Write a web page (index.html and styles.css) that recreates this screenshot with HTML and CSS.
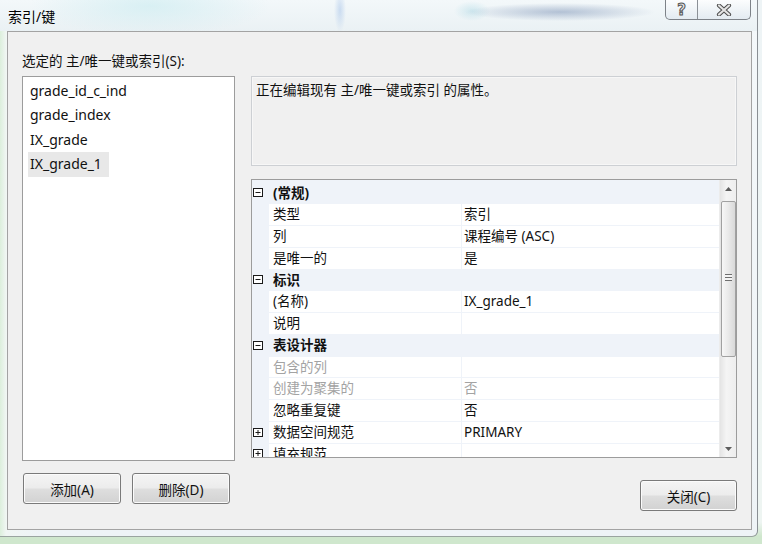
FILE: index.html
```html
<!DOCTYPE html>
<html lang="zh-CN">
<head>
    <meta charset="UTF-8">
    <title>索引/键</title>
    <link rel="stylesheet" href="styles.css">
</head>
<body>
    <div class="screen">
        <div class="window">
            <div class="titlebar">
                <span class="title">索引/键</span>
                <div class="caption-buttons">
                    <div class="cap-btn help">?</div>
                    <div class="cap-btn close">
                        <svg width="18" height="12" viewBox="0 0 18 12">
                            <path d="M4 1.5 L14 10.5 M14 1.5 L4 10.5" stroke="#4f4f4f" stroke-width="4.2" stroke-linecap="round"/>
                            <path d="M4 1.5 L14 10.5 M14 1.5 L4 10.5" stroke="#e4e4e4" stroke-width="2.2" stroke-linecap="round"/>
                        </svg>
                    </div>
                </div>
            </div>

            <div class="client">
                <div class="caption">选定的 主/唯一键或索引(S):</div>

                <div class="main">
                    <ul class="index-list">
                        <li>grade_id_c_ind</li>
                        <li>grade_index</li>
                        <li>IX_grade</li>
                        <li class="selected">IX_grade_1</li>
                    </ul>

                    <div class="right-col">
                        <div class="desc">正在编辑现有 主/唯一键或索引 的属性。</div>

                        <div class="props">
                            <div class="prop-rows">
                                <div class="row category">
                                    <span class="glyph"><svg width="10" height="9" viewBox="0 0 10 9"><rect x="0.5" y="0.5" width="9" height="8" fill="#fff" stroke="#1a1a1a"/><path d="M2.5 4.5 H7.5" stroke="#1a1a1a"/></svg></span>
                                    <span class="cat-label">(常规)</span>
                                </div>
                                <div class="row"><span class="glyph"></span><span class="name">类型</span><span class="value">索引</span></div>
                                <div class="row"><span class="glyph"></span><span class="name">列</span><span class="value">课程编号 (ASC)</span></div>
                                <div class="row"><span class="glyph"></span><span class="name">是唯一的</span><span class="value">是</span></div>

                                <div class="row category">
                                    <span class="glyph"><svg width="10" height="9" viewBox="0 0 10 9"><rect x="0.5" y="0.5" width="9" height="8" fill="#fff" stroke="#1a1a1a"/><path d="M2.5 4.5 H7.5" stroke="#1a1a1a"/></svg></span>
                                    <span class="cat-label">标识</span>
                                </div>
                                <div class="row"><span class="glyph"></span><span class="name">(名称)</span><span class="value">IX_grade_1</span></div>
                                <div class="row"><span class="glyph"></span><span class="name">说明</span><span class="value"></span></div>

                                <div class="row category">
                                    <span class="glyph"><svg width="10" height="9" viewBox="0 0 10 9"><rect x="0.5" y="0.5" width="9" height="8" fill="#fff" stroke="#1a1a1a"/><path d="M2.5 4.5 H7.5" stroke="#1a1a1a"/></svg></span>
                                    <span class="cat-label">表设计器</span>
                                </div>
                                <div class="row disabled"><span class="glyph"></span><span class="name">包含的列</span><span class="value"></span></div>
                                <div class="row disabled"><span class="glyph"></span><span class="name">创建为聚集的</span><span class="value">否</span></div>
                                <div class="row"><span class="glyph"></span><span class="name">忽略重复键</span><span class="value">否</span></div>
                                <div class="row">
                                    <span class="glyph"><svg width="10" height="9" viewBox="0 0 10 9"><rect x="0.5" y="0.5" width="9" height="8" fill="#fff" stroke="#1a1a1a"/><path d="M2.5 4.5 H7.5 M5 2 V7" stroke="#1a1a1a"/></svg></span>
                                    <span class="name">数据空间规范</span><span class="value">PRIMARY</span>
                                </div>
                                <div class="row">
                                    <span class="glyph"><svg width="10" height="9" viewBox="0 0 10 9"><rect x="0.5" y="0.5" width="9" height="8" fill="#fff" stroke="#1a1a1a"/><path d="M2.5 4.5 H7.5 M5 2 V7" stroke="#1a1a1a"/></svg></span>
                                    <span class="name">填充规范</span><span class="value"></span>
                                </div>
                            </div>

                            <div class="vscroll">
                                <div class="sb-arrow"><svg width="7" height="4" viewBox="0 0 7 4"><path d="M0 4 L3.5 0 L7 4 Z" fill="#5d5d5d"/></svg></div>
                                <div class="sb-thumb">
                                    <span class="grip"></span>
                                </div>
                                <div class="sb-arrow down"><svg width="7" height="4" viewBox="0 0 7 4"><path d="M0 0 L7 0 L3.5 4 Z" fill="#5d5d5d"/></svg></div>
                            </div>
                        </div>
                    </div>
                </div>

                <div class="footer">
                    <div class="left-buttons">
                        <button type="button" class="btn">添加(A)</button>
                        <button type="button" class="btn">删除(D)</button>
                    </div>
                    <button type="button" class="btn close-btn">关闭(C)</button>
                </div>
            </div>
        </div>
    </div>
</body>
</html>
```

FILE: styles.css
```css
*, *::after, *::before {
    box-sizing: border-box;
}

body {
    margin: 0;
    font-family: "Noto Sans", "Noto Sans CJK SC", sans-serif;
    font-size: 13.5px;
    color: #111;
}

.screen {
    width: 762px;
    height: 544px;
    overflow: hidden;
    background: linear-gradient(to bottom, #eef4f6 0%, #eef5f2 96%, #cfe7cd 98.6%, #cfe7cd 100%);
}

.window {
    width: 758px;
    height: 537px;
    border-right: 1px solid #8a8f94;
    border-bottom: 1px solid #9aa4a0;
    border-bottom-right-radius: 6px;
    background:
        linear-gradient(to right, #dcefdc 0px, #f0f6f3 6px, rgba(255,255,255,0) 40px),
        linear-gradient(to bottom, #f4f8fa 0%, #eef3f6 100%);
}

/* title bar with blurred glass */
.titlebar {
    height: 31px;
    display: flex;
    align-items: center;
    padding-left: 8px;
    background:
        radial-gradient(ellipse 95px 9px at 560px 12px, rgba(70, 100, 150, 0.36), rgba(70, 100, 150, 0)),
        radial-gradient(ellipse 18px 10px at 472px 11px, rgba(110, 190, 210, 0.25), rgba(110, 190, 210, 0)),
        radial-gradient(ellipse 6px 22px at 340px 10px, rgba(130, 170, 225, 0.35), rgba(130, 170, 225, 0)),
        radial-gradient(ellipse 120px 30px at 150px 6px, rgba(200, 235, 240, 0.6), rgba(200, 235, 240, 0)),
        linear-gradient(to bottom, #f3f8fa, #eaf1f4);
}

.title {
    font-size: 14px;
    color: #000;
    margin-top: 1px;
}

.caption-buttons {
    margin-left: auto;
    margin-right: 6px;
    align-self: flex-start;
    display: flex;
    height: 20px;
    border: 1px solid #7d8288;
    border-top: none;
    border-radius: 0 0 5px 5px;
    overflow: hidden;
    background: linear-gradient(to bottom, rgba(255,255,255,0.75), rgba(225,233,240,0.8));
}

.cap-btn {
    display: flex;
    align-items: center;
    justify-content: center;
}

.help {
    width: 32px;
    border-right: 1px solid #8b9096;
    font-family: "DejaVu Sans", sans-serif;
    font-size: 15px;
    font-weight: 700;
    color: #e6e6e6;
    -webkit-text-stroke: 1px #555;
}

.close {
    width: 52px;
}

/* client area */
.client {
    margin-left: 7px;
    width: 745px;
    height: 499px;
    border: 1px solid #a3a3a3;
    background: #f0f0f0;
    padding: 20px 14px 0 14px;
}

.caption {
    line-height: 18px;
    height: 18px;
    margin-bottom: 6px;
}

.main {
    display: grid;
    grid-template-columns: 213px 486px;
    column-gap: 16px;
    height: 385px;
}

.index-list {
    list-style: none;
    margin: 0;
    padding: 2px 5px;
    background: #fff;
    border: 1px solid #9c9c9c;
}

.index-list li {
    width: fit-content;
    line-height: 24.4px;
    height: 24.4px;
    padding: 0 7px 0 2px;
    font-size: 14px;
}

.index-list li.selected {
    background: #e8e8e8;
}

.right-col {
    display: flex;
    flex-direction: column;
    gap: 13px;
}

.desc {
    height: 90px;
    border: 1px solid #cdd0d4;
    box-shadow: inset 0 0 0 1px #f7f7f7;
    padding: 3px 4px;
    line-height: 20px;
}

/* property grid */
.props {
    height: 279px;
    border: 1px solid #9c9c9c;
    display: flex;
    background: #fff;
}

.prop-rows {
    width: 467px;
    overflow: hidden;
    display: flex;
    flex-direction: column;
    gap: 1px;
    padding-top: 2.5px;
    background: #eff3f9;
}

.row {
    flex: none;
    height: 20.75px;
    display: grid;
    grid-template-columns: 16px 192px 258px;
    column-gap: 1px;
    align-items: stretch;
}

.row .glyph {
    display: flex;
    align-items: center;
    padding-left: 1px;
}

.row .name,
.row .value {
    background: #fff;
    line-height: 20.75px;
    white-space: nowrap;
}

.row .name {
    padding-left: 4px;
}

.row .value {
    padding-left: 2px;
}

.category .cat-label {
    grid-column: 2 / 4;
    font-weight: 700;
    line-height: 20.75px;
    padding-left: 4px;
}

.disabled .name,
.disabled .value {
    color: #a3a3a3;
}

/* scroll bar */
.vscroll {
    width: 17px;
    display: flex;
    flex-direction: column;
    align-items: center;
    background: linear-gradient(to right, #e4e4e4, #f4f4f4 40%, #eeeeee);
    border-left: 1px solid #ececec;
}

.sb-arrow {
    width: 16px;
    height: 17px;
    display: flex;
    align-items: center;
    justify-content: center;
}

.sb-arrow.down {
    margin-top: auto;
}

.sb-thumb {
    margin-top: 4px;
    width: 15px;
    height: 156px;
    border: 1px solid #a1a1a1;
    border-radius: 2px;
    background: linear-gradient(to right, #f7f7f7, #e9e9e9 50%, #d9d9d9);
    display: flex;
    justify-content: center;
    padding-top: 72px;
}

.grip {
    width: 7px;
    height: 7px;
    background: repeating-linear-gradient(to bottom, #6f6f6f 0, #6f6f6f 1px, #f4f4f4 1px, #f4f4f4 3px);
}

/* buttons */
.footer {
    display: flex;
    justify-content: space-between;
    align-items: flex-start;
    padding-left: 1px;
}

.left-buttons {
    display: flex;
    gap: 11px;
    margin-top: 12px;
}

.btn {
    width: 98px;
    height: 31px;
    font-family: inherit;
    font-size: 13.5px;
    color: #111;
    border: 1px solid #7a7a7a;
    border-radius: 3px;
    box-shadow: inset 0 0 0 1px #fbfbfb;
    background: linear-gradient(to bottom, #f4f4f4 0%, #ececec 48%, #dedede 52%, #d2d2d2 100%);
    padding: 0;
}

.close-btn {
    margin-top: 19px;
    width: 97px;
}
```
